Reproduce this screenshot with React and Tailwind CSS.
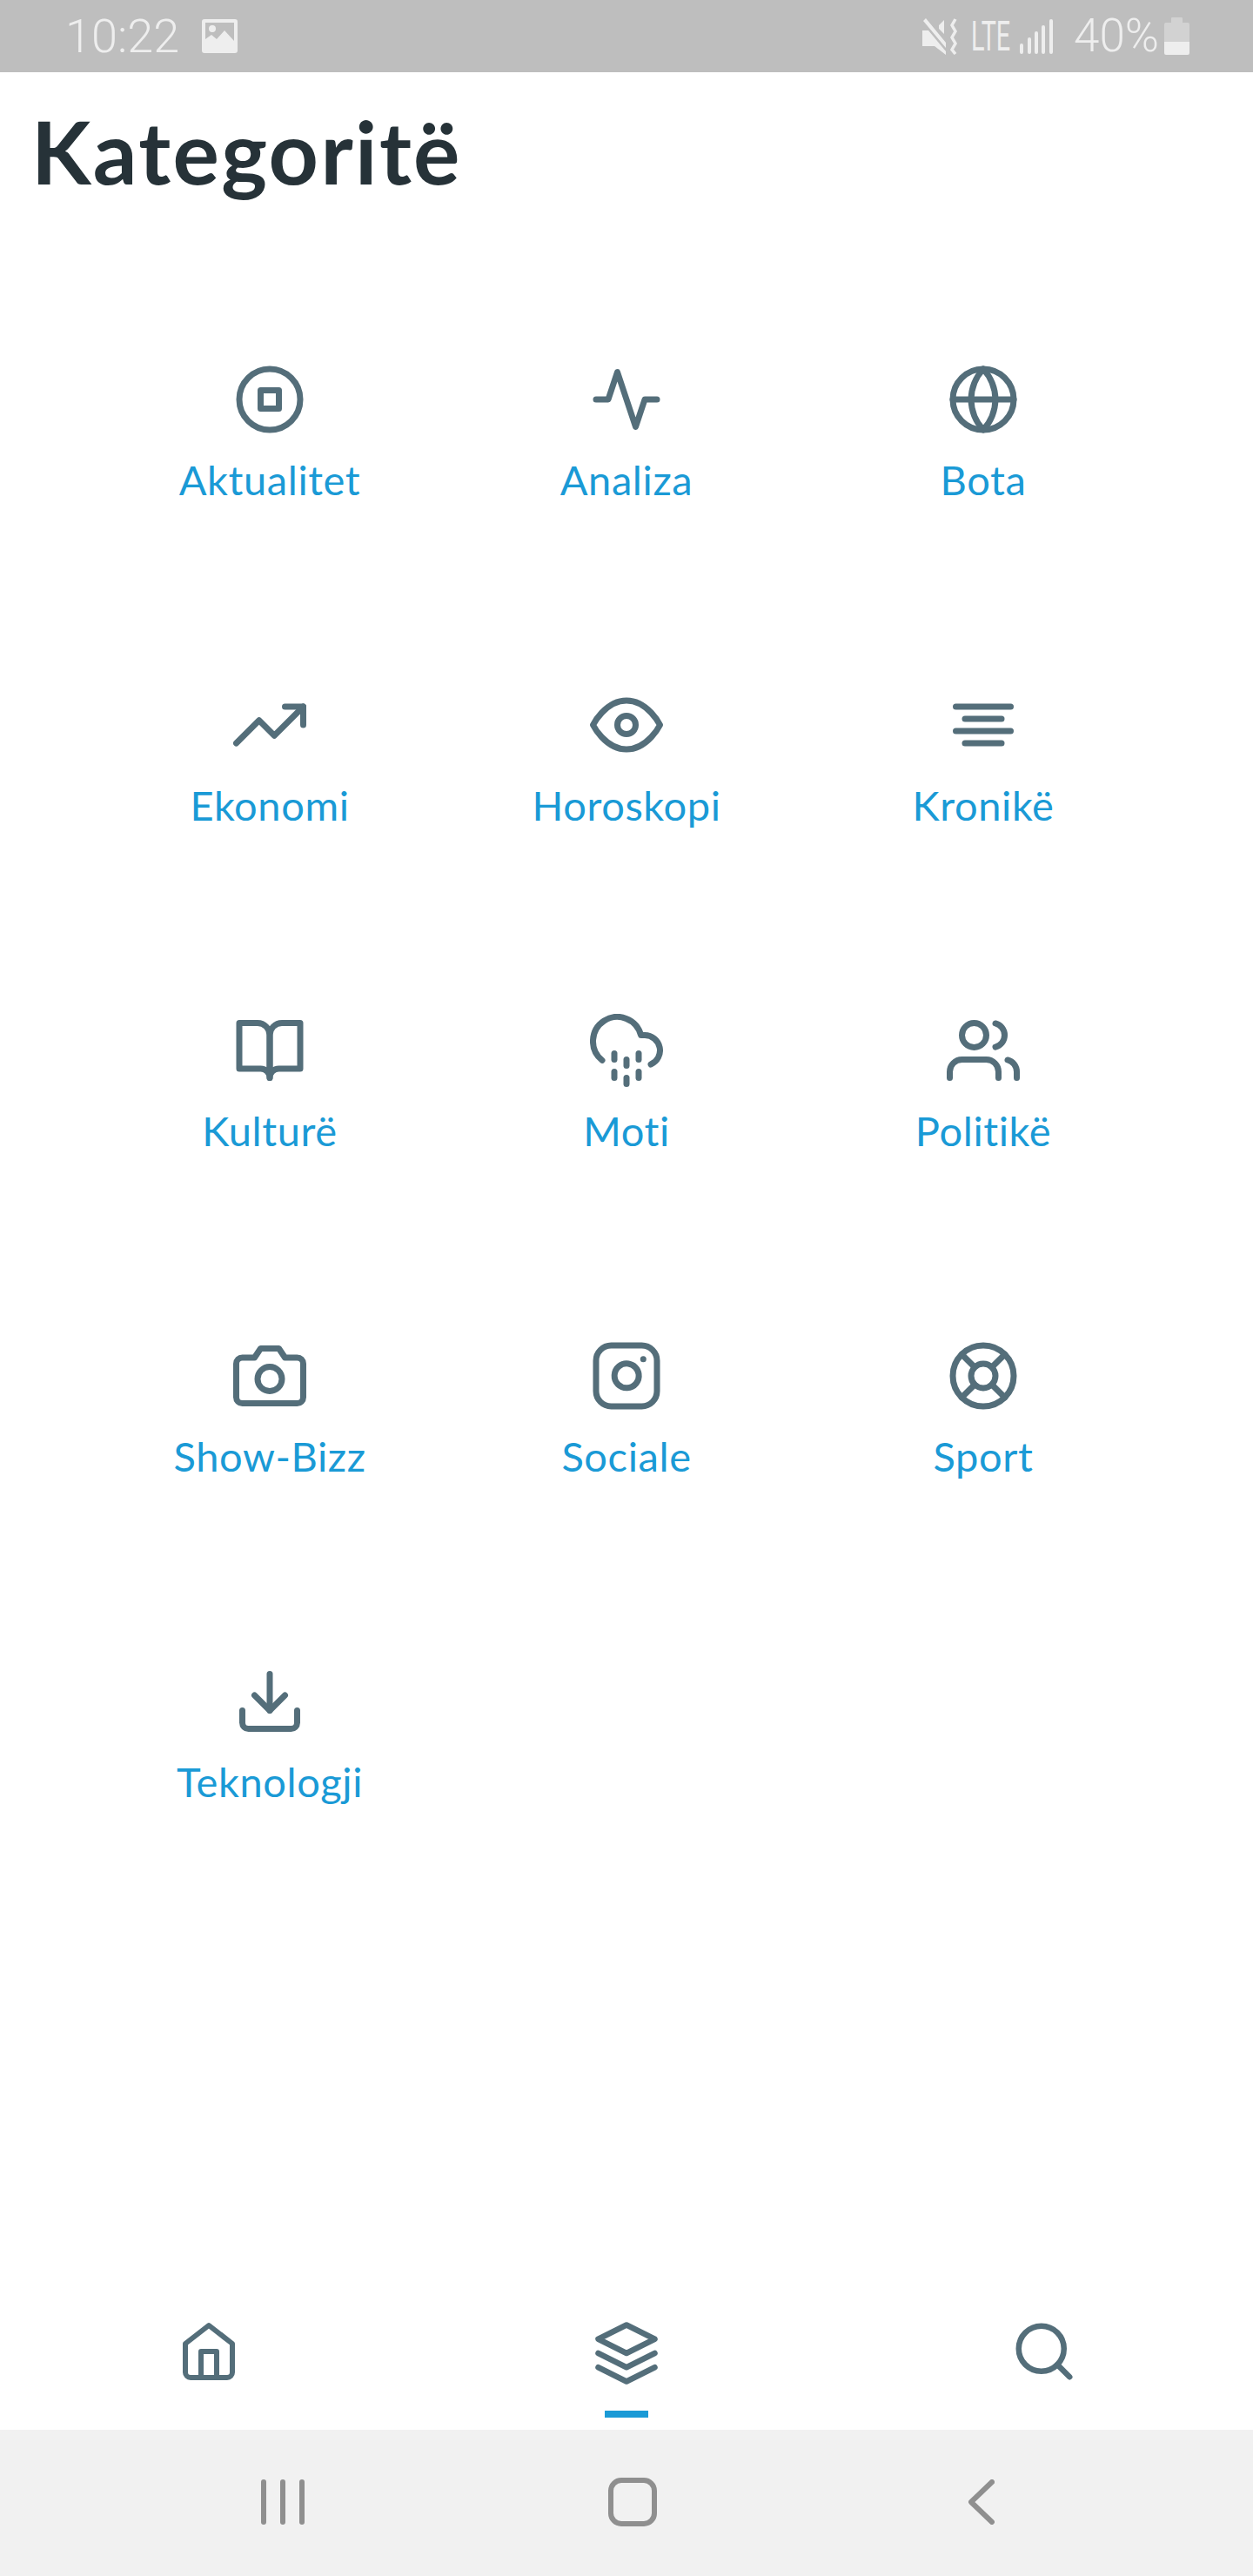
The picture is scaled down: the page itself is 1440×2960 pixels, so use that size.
const Feather = ({ children, className }) => (
  <svg viewBox="0 0 24 24" fill="none" stroke="currentColor" strokeWidth="2" strokeLinecap="round" strokeLinejoin="round" className={className}>
    {children}
  </svg>
);

const items = [
  ["Aktualitet", <><circle cx="12" cy="12" r="10" /><rect x="9" y="9" width="6" height="6" /></>],
  ["Analiza", <polyline points="22 12 18 12 15 21 9 3 6 12 2 12" />],
  ["Bota", <><circle cx="12" cy="12" r="10" /><line x1="2" y1="12" x2="22" y2="12" /><path d="M12 2a15.3 15.3 0 0 1 4 10 15.3 15.3 0 0 1-4 10 15.3 15.3 0 0 1-4-10 15.3 15.3 0 0 1 4-10z" /></>],
  ["Ekonomi", <><polyline points="23 6 13.5 15.5 8.5 10.5 1 18" /><polyline points="17 6 23 6 23 12" /></>],
  ["Horoskopi", <><path d="M1 12s4-8 11-8 11 8 11 8-4 8-11 8-11-8-11-8z" /><circle cx="12" cy="12" r="3" /></>],
  ["Kronikë", <><line x1="18" y1="10" x2="6" y2="10" /><line x1="21" y1="6" x2="3" y2="6" /><line x1="21" y1="14" x2="3" y2="14" /><line x1="18" y1="18" x2="6" y2="18" /></>],
  ["Kulturë", <><path d="M2 3h6a4 4 0 0 1 4 4v14a3 3 0 0 0-3-3H2z" /><path d="M22 3h-6a4 4 0 0 0-4 4v14a3 3 0 0 1 3-3h7z" /></>],
  ["Moti", <><line x1="8" y1="19" x2="8" y2="21" /><line x1="8" y1="13" x2="8" y2="15" /><line x1="16" y1="19" x2="16" y2="21" /><line x1="16" y1="13" x2="16" y2="15" /><line x1="12" y1="21" x2="12" y2="23" /><line x1="12" y1="15" x2="12" y2="17" /><path d="M20 16.58A5 5 0 0 0 18 7h-1.26A8 8 0 1 0 4 15.25" /></>],
  ["Politikë", <><path d="M17 21v-2a4 4 0 0 0-4-4H5a4 4 0 0 0-4 4v2" /><circle cx="9" cy="7" r="4" /><path d="M23 21v-2a4 4 0 0 0-3-3.87" /><path d="M16 3.13a4 4 0 0 1 0 7.75" /></>],
  ["Show-Bizz", <><path d="M23 19a2 2 0 0 1-2 2H3a2 2 0 0 1-2-2V8a2 2 0 0 1 2-2h4l2-3h6l2 3h4a2 2 0 0 1 2 2z" /><circle cx="12" cy="13" r="4" /></>],
  ["Sociale", <><rect x="2" y="2" width="20" height="20" rx="5" ry="5" /><path d="M16 11.37A4 4 0 1 1 12.63 8 4 4 0 0 1 16 11.37z" /><line x1="17.5" y1="6.5" x2="17.51" y2="6.5" /></>],
  ["Sport", <><circle cx="12" cy="12" r="10" /><circle cx="12" cy="12" r="4" /><line x1="4.93" y1="4.93" x2="9.17" y2="9.17" /><line x1="14.83" y1="14.83" x2="19.07" y2="19.07" /><line x1="14.83" y1="9.17" x2="19.07" y2="4.93" /><line x1="4.93" y1="19.07" x2="9.17" y2="14.83" /></>],
  ["Teknologji", <><path d="M21 15v4a2 2 0 0 1-2 2H5a2 2 0 0 1-2-2v-4" /><polyline points="7 10 12 15 17 10" /><line x1="12" y1="15" x2="12" y2="3" /></>],
];

const StatusBar = () => (
  <div className="flex h-[83px] items-center justify-between bg-[#bebebe] pl-[75px] pr-[73px] text-[#eeeeee] font-['Roboto',sans-serif]">
    <div className="flex items-center gap-[26px]">
      <span className="text-[54px] font-light leading-none">10:22</span>
      <svg viewBox="0 0 41 39" className="h-[39px] w-[41px]">
        <path fill="#eeeeee" fillRule="evenodd" d="M3 0h35a3 3 0 0 1 3 3v33a3 3 0 0 1-3 3H3a3 3 0 0 1-3-3V3a3 3 0 0 1 3-3zM4 4v19l7-5 6 5 9-10 11 12V4z" />
        <circle cx="12" cy="11" r="4" fill="#eeeeee" />
      </svg>
    </div>
    <div className="flex items-center">
      <svg viewBox="0 0 42 42" className="h-[42px] w-[42px]">
        <path fill="#eeeeee" d="M0 14h7l20 24v4L14 32H0z" />
        <path fill="#eeeeee" d="M4 0l23 28v6L1 3zM19 8l6-6v16l-6-6z" />
        <path fill="none" stroke="#eeeeee" strokeWidth="3.5" d="M38 1l-4 7 4 7-4 7 4 7-4 7 4 5" />
      </svg>
      <span className="ml-[14px] w-[44px] origin-left scale-x-[0.6] text-[48px] font-normal leading-none">LTE</span>
      <svg viewBox="0 0 38 40" className="ml-[12px] h-[40px] w-[38px]">
        <g fill="#eeeeee">
          <rect x="0" y="28" width="4" height="12" rx="2" />
          <rect x="9" y="21" width="4" height="19" rx="2" />
          <rect x="17" y="14" width="4" height="26" rx="2" />
          <rect x="25" y="7" width="4" height="33" rx="2" />
          <rect x="34" y="0" width="4" height="40" rx="2" />
        </g>
      </svg>
      <span className="ml-[24px] text-[53px] font-light leading-none">40%</span>
      <svg viewBox="0 0 29 43" className="ml-[6px] h-[43px] w-[29px]">
        <path fill="#d2d2d2" d="M9 0h11a1 1 0 0 1 1 1v5h6a2 2 0 0 1 2 2v20H0V8a2 2 0 0 1 2-2h6V1a1 1 0 0 1 1-1z" />
        <path fill="#eeeeee" d="M0 28h29v13a2 2 0 0 1-2 2H2a2 2 0 0 1-2-2z" />
      </svg>
    </div>
  </div>
);

const SystemNav = () => (
  <div className="grid h-[168px] grid-cols-3 items-center bg-[#f1f1f1] pb-[2px] pl-[300px] pr-[297px]">
    <div className="flex gap-[16px]">
      <span className="h-[52px] w-[6px] rounded-full bg-[#8f8f8f]" />
      <span className="h-[52px] w-[6px] rounded-full bg-[#8f8f8f]" />
      <span className="h-[52px] w-[6px] rounded-full bg-[#8f8f8f]" />
    </div>
    <div className="flex justify-center">
      <span className="ml-[10px] h-[56px] w-[56px] rounded-[15px] border-[6px] border-[#8f8f8f]" />
    </div>
    <div className="flex justify-end">
      <svg viewBox="0 0 30 52" className="h-[52px] w-[30px]" fill="none" stroke="#8f8f8f" strokeWidth="6" strokeLinecap="round" strokeLinejoin="round">
        <polyline points="27 3 3 26 27 49" />
      </svg>
    </div>
  </div>
);

export default function App() {
  return (
    <div className="flex h-[2960px] w-[1440px] flex-col bg-white font-['Lato',sans-serif]">
      <StatusBar />
      <h1 className="mt-[42px] pl-[36px] text-[100px] font-bold leading-[96px] tracking-[2.4px] text-[#263238]">Kategoritë</h1>
      <div className="mt-[196px] grid grid-cols-3 auto-rows-[374px] px-[105px]">
        {items.map(([label, icon]) => (
          <div key={label} className="flex flex-col items-center">
            <Feather className="h-[84px] w-[84px] text-[#546e7a]">{icon}</Feather>
            <span className="mt-[22px] text-[47px] leading-[56px] tracking-[0.6px] text-[#1a9ad6]">{label}</span>
          </div>
        ))}
      </div>
      <div className="mt-auto">
        <div className="relative grid h-[150px] grid-cols-3 items-start">
          <div className="flex justify-center pt-[24px]">
            <Feather className="h-[72px] w-[72px] text-[#546e7a]">
              <path d="M3 9l9-7 9 7v11a2 2 0 0 1-2 2H5a2 2 0 0 1-2-2z" />
              <polyline points="9 22 9 12 15 12 15 22" />
            </Feather>
          </div>
          <div className="flex justify-center pt-[23px]">
            <Feather className="h-[78px] w-[78px] text-[#546e7a]">
              <polygon points="12 2 2 7 12 12 22 7 12 2" />
              <polyline points="2 17 12 22 22 17" />
              <polyline points="2 12 12 17 22 12" />
            </Feather>
          </div>
          <div className="flex justify-center pt-[21px]">
            <Feather className="h-[78px] w-[78px] text-[#546e7a]">
              <circle cx="11" cy="11" r="8" />
              <line x1="21" y1="21" x2="16.65" y2="16.65" />
            </Feather>
          </div>
          <span className="absolute bottom-[14px] left-[695px] h-[8px] w-[50px] bg-[#1a9ad6]" />
        </div>
        <SystemNav />
      </div>
    </div>
  );
}
